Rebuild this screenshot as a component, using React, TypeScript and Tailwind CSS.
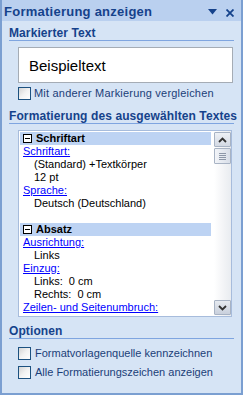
import React from "react";

const F = { fontFamily: '"Liberation Sans", Arial, sans-serif' };

function CheckBox() {
  return (
    <div className="w-[13px] h-[13px] border border-[#1c5180] bg-gradient-to-br from-[#d4d4d4] via-[#f2f2f2] to-white shrink-0" />
  );
}

function Header({ children }: { children: React.ReactNode }) {
  return (
    <div>
      <div className="h-[14px] leading-[14px] text-[12px] font-bold text-[#15428b] whitespace-nowrap tracking-[0.1px]">{children}</div>
      <div className="h-px bg-[#7fa5e0] mr-[-1px]" />
    </div>
  );
}

function GroupRow({ label }: { label: string }) {
  return (
    <div className="h-[13px] flex items-center bg-[#bdd3f3] pl-[3px]">
      <div className="w-[9px] h-[9px] border border-black bg-white flex items-center justify-center">
        <div className="w-[5px] h-px bg-black" />
      </div>
      <span className="ml-[4px] text-[11px] font-bold text-black leading-[13px]">{label}</span>
    </div>
  );
}

function LinkRow({ label }: { label: string }) {
  return (
    <div className="h-[13px] leading-[13px] pl-[3px] text-[11px] text-[#0000ff] underline whitespace-nowrap">{label}</div>
  );
}

function ValRow({ label }: { label: string }) {
  return (
    <div className="h-[13px] leading-[13px] pl-[14px] text-[11px] text-black whitespace-pre">{label}</div>
  );
}

export default function App() {
  return (
    <div style={F} className="w-[243px] h-[395px] bg-[#d6e4f5] border-x-2 border-b-2 border-[#7b9fd1] flex flex-col overflow-hidden">
      {/* title bar */}
      <div className="h-[21px] bg-[#bad0ef] flex items-center pl-[2px] pr-[7px] shrink-0">
        <span className="text-[13px] font-bold text-[#15428b] leading-[15px] mt-[1px] tracking-[0.25px] whitespace-nowrap">Formatierung anzeigen</span>
        <div className="ml-auto flex items-center gap-[9px] mt-[2px]">
          <svg width="9" height="6" viewBox="0 0 9 6"><path d="M0 0 H9 L4.5 5.5 Z" fill="#15428b" /></svg>
          <svg width="8" height="8" viewBox="0 0 8 8" className="mt-[2px]"><path d="M0.5 0.5 L7.5 7.5 M7.5 0.5 L0.5 7.5" stroke="#15428b" strokeWidth="1.8" /></svg>
        </div>
      </div>

      <div className="pl-[7px] pr-[8px] flex flex-col">
        <div className="mt-[5px]"><Header>Markierter Text</Header></div>

        <div className="ml-[9px] mt-[6px] h-[36px] border border-[#a5acb5] bg-white flex items-center pl-[10px]">
          <span className="text-[15px] text-black leading-[18px] mt-[1px]">Beispieltext</span>
        </div>

        <div className="ml-[9px] mt-[4px] h-[13px] flex items-center">
          <CheckBox />
          <span className="ml-[3px] text-[11px] text-[#1b3e78] leading-[13px] whitespace-nowrap tracking-[0.2px]">Mit anderer Markierung vergleichen</span>
        </div>

        <div className="mt-[9px]"><Header>Formatierung des ausgewählten Textes</Header></div>

        <div className="ml-[9px] mt-[6px] mr-[1px] h-[187px] border border-[#a7bcdc] bg-white flex">
          <div className="flex-1 pt-[1px] pl-[1px] pr-[3px] flex flex-col">
            <GroupRow label="Schriftart" />
            <LinkRow label="Schriftart:" />
            <ValRow label="(Standard) +Textkörper" />
            <ValRow label="12 pt" />
            <LinkRow label="Sprache:" />
            <ValRow label="Deutsch (Deutschland)" />
            <div className="h-[13px]" />
            <GroupRow label="Absatz" />
            <LinkRow label="Ausrichtung:" />
            <ValRow label="Links" />
            <LinkRow label="Einzug:" />
            <ValRow label="Links:  0 cm" />
            <ValRow label="Rechts:  0 cm" />
            <LinkRow label="Zeilen- und Seitenumbruch:" />
          </div>
          {/* scrollbar */}
          <div className="w-[17px] pt-[1px] pb-[1px] flex flex-col bg-gradient-to-r from-[#ffffff] via-[#f4f5f7] to-[#e9ecf0]">
            <div className="h-[15px] border border-[#a8b3c4] rounded-[1px] bg-gradient-to-b from-[#eef1f6] to-[#d3d9e3] flex items-center justify-center">
              <svg width="9" height="6" viewBox="0 0 9 6"><path d="M1 5 L4.5 1.5 L8 5" stroke="#333" strokeWidth="1.8" fill="none" /></svg>
            </div>
            <div className="h-[16px] mt-[1px] border border-[#a8b3c4] rounded-[1px] bg-gradient-to-r from-[#f2f4f8] to-[#d8dee8] flex flex-col items-center justify-center gap-[1px]">
              <div className="w-[7px] h-px bg-[#8d97a8]" />
              <div className="w-[7px] h-px bg-[#8d97a8]" />
              <div className="w-[7px] h-px bg-[#8d97a8]" />
              <div className="w-[7px] h-px bg-[#8d97a8]" />
            </div>
            <div className="flex-1" />
            <div className="h-[15px] border border-[#a8b3c4] rounded-[1px] bg-gradient-to-b from-[#e6eaf0] to-[#c9d0dc] flex items-center justify-center">
              <svg width="9" height="6" viewBox="0 0 9 6"><path d="M1 1 L4.5 4.5 L8 1" stroke="#333" strokeWidth="1.8" fill="none" /></svg>
            </div>
          </div>
        </div>

        <div className="mt-[7px]"><Header>Optionen</Header></div>

        <div className="ml-[9px] mt-[8px] h-[13px] flex items-center">
          <CheckBox />
          <span className="ml-[4px] text-[11px] text-[#1b3e78] leading-[13px] whitespace-nowrap">Formatvorlagenquelle kennzeichnen</span>
        </div>
        <div className="ml-[9px] mt-[6px] h-[13px] flex items-center">
          <CheckBox />
          <span className="ml-[4px] text-[11px] text-[#1b3e78] leading-[13px] whitespace-nowrap">Alle Formatierungszeichen anzeigen</span>
        </div>
      </div>
    </div>
  );
}
